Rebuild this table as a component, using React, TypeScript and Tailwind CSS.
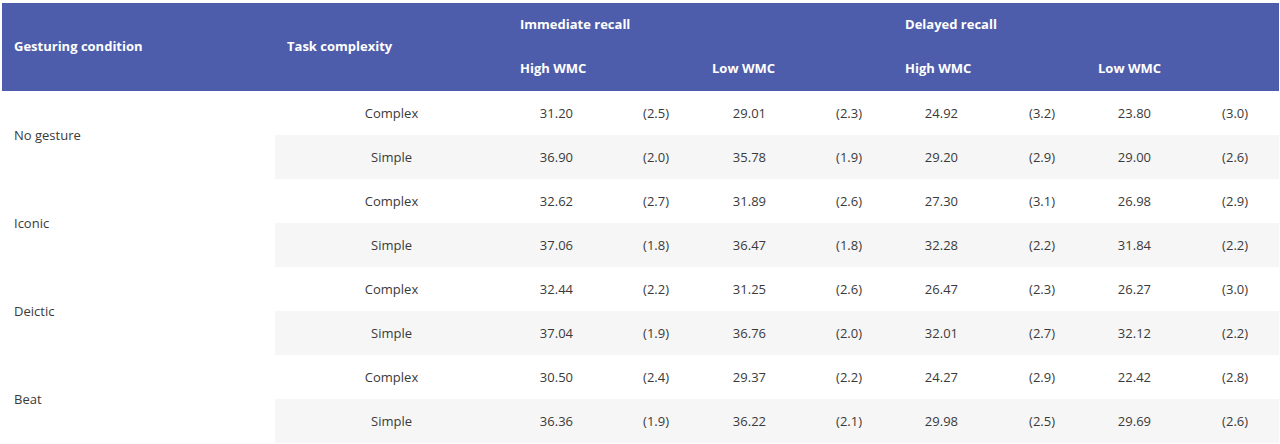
import React from "react";

const data: [string, string[][]][] = [
  ["No gesture", [["Complex", "31.20", "(2.5)", "29.01", "(2.3)", "24.92", "(3.2)", "23.80", "(3.0)"], ["Simple", "36.90", "(2.0)", "35.78", "(1.9)", "29.20", "(2.9)", "29.00", "(2.6)"]]],
  ["Iconic", [["Complex", "32.62", "(2.7)", "31.89", "(2.6)", "27.30", "(3.1)", "26.98", "(2.9)"], ["Simple", "37.06", "(1.8)", "36.47", "(1.8)", "32.28", "(2.2)", "31.84", "(2.2)"]]],
  ["Deictic", [["Complex", "32.44", "(2.2)", "31.25", "(2.6)", "26.47", "(2.3)", "26.27", "(3.0)"], ["Simple", "37.04", "(1.9)", "36.76", "(2.0)", "32.01", "(2.7)", "32.12", "(2.2)"]]],
  ["Beat", [["Complex", "30.50", "(2.4)", "29.37", "(2.2)", "24.27", "(2.9)", "22.42", "(2.8)"], ["Simple", "36.36", "(1.9)", "36.22", "(2.1)", "29.98", "(2.5)", "29.69", "(2.6)"]]],
];

export default function App() {
  const th = "text-left font-bold text-white px-[12px] h-[44px] align-middle";
  return (
    <div
      className="w-[1280px] h-[444px] bg-white pl-[2px] pt-[3px] overflow-hidden"
      style={{ fontFamily: '"Open Sans", "Noto Sans", sans-serif' }}
    >
      <table className="table-fixed border-collapse w-[1276px] text-[13px] text-[#3a3a3a]">
        <colgroup>
          <col className="w-[273px]" />
          <col className="w-[233px]" />
          <col className="w-[96px]" />
          <col className="w-[96px]" />
          <col className="w-[97px]" />
          <col className="w-[96px]" />
          <col className="w-[96px]" />
          <col className="w-[97px]" />
          <col className="w-[96px]" />
          <col className="w-[97px]" />
        </colgroup>
        <thead className="bg-[#4d5dab]">
          <tr>
            <th rowSpan={2} className={th}>Gesturing condition</th>
            <th rowSpan={2} className={th}>Task complexity</th>
            <th colSpan={4} className={th}>Immediate recall</th>
            <th colSpan={4} className={th}>Delayed recall</th>
          </tr>
          <tr>
            <th colSpan={2} className={th}>High WMC</th>
            <th colSpan={2} className={th}>Low WMC</th>
            <th colSpan={2} className={th}>High WMC</th>
            <th colSpan={2} className={th}>Low WMC</th>
          </tr>
        </thead>
        <tbody>
          {data.map(([cond, rows]) =>
            rows.map((r, i) => (
              <tr key={cond + i} className="h-[44px]">
                {i === 0 && (
                  <td rowSpan={2} className="bg-white px-[12px] pt-[2px] align-middle text-left">
                    {cond}
                  </td>
                )}
                <td className={`text-center pt-[2px] align-middle ${i === 1 ? "bg-[#f6f6f6]" : "bg-white"}`}>
                  {r[0]}
                </td>
                {r.slice(1).map((v, j) => (
                  <td
                    key={j}
                    className={`text-right pr-[31px] pt-[2px] align-middle ${i === 1 ? "bg-[#f6f6f6]" : "bg-white"}`}
                  >
                    {v}
                  </td>
                ))}
              </tr>
            ))
          )}
        </tbody>
      </table>
    </div>
  );
}
